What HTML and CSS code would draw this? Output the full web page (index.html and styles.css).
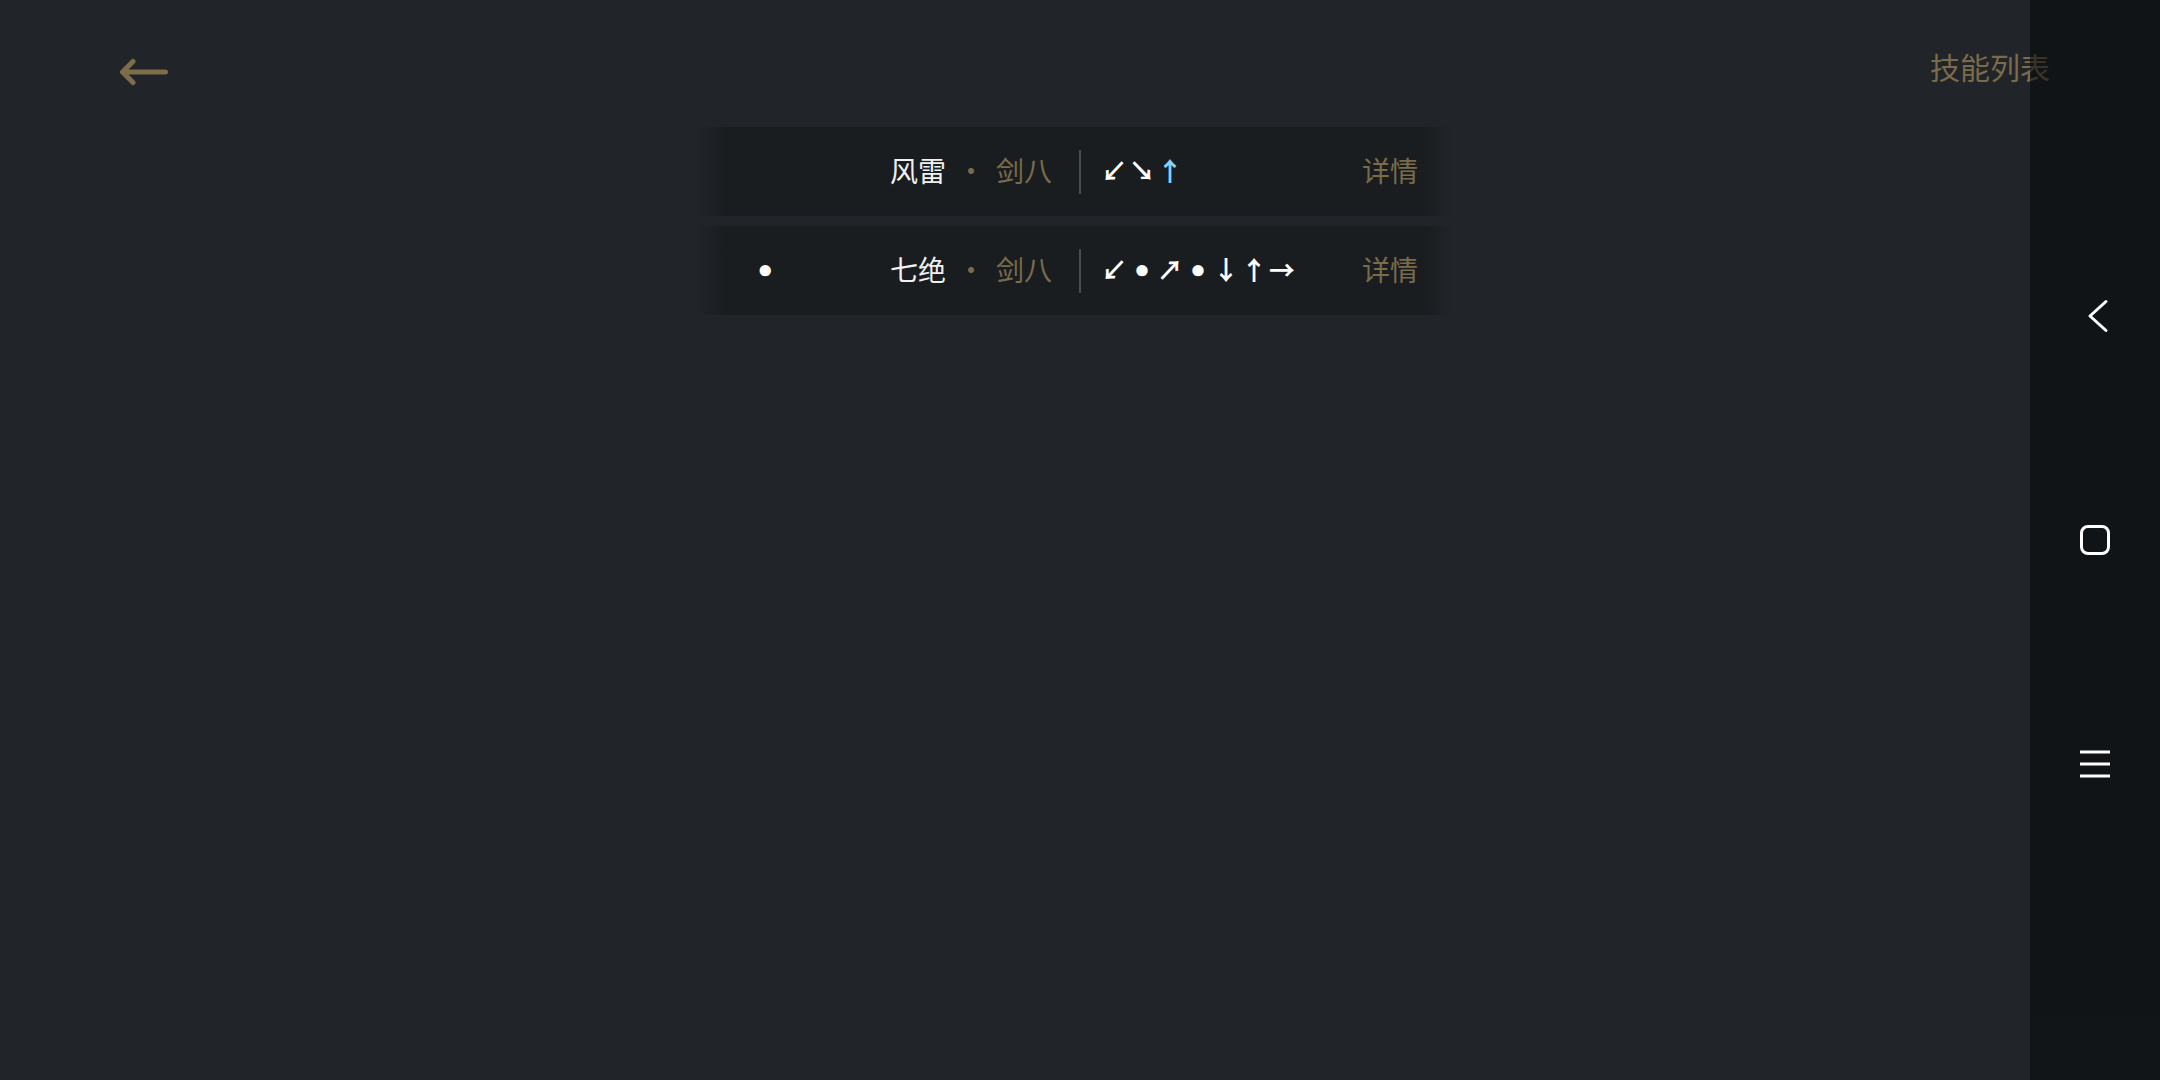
FILE: index.html
```html
<!DOCTYPE html>
<html lang="zh-CN">
<head>
<meta charset="utf-8">
<title>技能列表</title>
<link rel="stylesheet" href="styles.css">
</head>
<body>
<header class="header">
  <div class="back">
    <svg viewBox="0 0 50 28" width="50" height="28"><path d="M46.5 14 H3.5 M14 3.5 L3.5 14 L14 24.5" fill="none" stroke="#7d6d4b" stroke-width="5" stroke-linecap="round" stroke-linejoin="round"/></svg>
  </div>
  <div class="title">技能列表</div>
</header>
<main class="list">
  <div class="card">
    <div class="left">
      <span class="mark"></span>
      <div class="name-group">
        <span class="name">风雷</span><span class="sep">·</span><span class="cls">剑八</span>
      </div>
    </div>
    <div class="divider"></div>
    <div class="arrows"><span>↙</span><span>↘</span><span class="hl">↑</span></div>
    <div class="detail">详情</div>
  </div>
  <div class="card">
    <div class="left">
      <span class="mark">•</span>
      <div class="name-group">
        <span class="name">七绝</span><span class="sep">·</span><span class="cls">剑八</span>
      </div>
    </div>
    <div class="divider"></div>
    <div class="arrows"><span>↙</span><span class="dot">•</span><span>↗</span><span class="dot">•</span><span>↓</span><span>↑</span><span>→</span></div>
    <div class="detail">详情</div>
  </div>
</main>
<nav class="navbar">
  <div class="nav-btn">
    <svg viewBox="0 0 30 36" width="30" height="36"><path d="M26 3.5 L10 18 L26 32.5" fill="none" stroke="#fff" stroke-width="3" stroke-linecap="round" stroke-linejoin="round"/></svg>
  </div>
  <div class="nav-btn">
    <svg viewBox="0 0 34 34" width="34" height="34"><rect x="3.5" y="3.5" width="27" height="27" rx="6.5" fill="none" stroke="#fff" stroke-width="3"/></svg>
  </div>
  <div class="nav-btn">
    <svg viewBox="0 0 34 30" width="34" height="30"><path d="M2 3 H32 M2 15 H32 M2 27 H32" fill="none" stroke="#fff" stroke-width="3"/></svg>
  </div>
</nav>
</body>
</html>
```
FILE: styles.css
```css
html, body {
  margin: 0;
  padding: 0;
}
body {
  background: #212429;
  font-family: "Noto Sans CJK SC", "Noto Sans", sans-serif;
  width: 2160px;
  height: 1080px;
  overflow: hidden;
  position: relative;
}
.header {
  display: flex;
  align-items: center;
  justify-content: space-between;
  height: 40px;
  padding: 48px 110px 0 119px;
}
.back {
  padding-top: 8px;
}
.back svg {
  display: block;
}
.title {
  font-size: 30px;
  line-height: 40px;
  color: #7a6b4b;
  transform: translateY(-2px);
}
.list {
  display: flex;
  flex-direction: column;
  align-items: center;
  gap: 10px;
  margin-top: 39px;
  padding-right: 10px;
}
.card {
  width: 756px;
  height: 89px;
  box-sizing: border-box;
  padding-bottom: 3px;
  display: flex;
  align-items: center;
  background: linear-gradient(90deg, rgba(26, 29, 32, 0) 0, #1a1d20 3.5%, #1a1d20 96.5%, rgba(26, 29, 32, 0) 100%);
}
.left {
  width: 355px;
  box-sizing: border-box;
  padding-left: 58px;
  display: flex;
  align-items: center;
  justify-content: space-between;
}
.mark {
  width: 16px;
  text-align: center;
  font-family: "DejaVu Sans", sans-serif;
  font-weight: bold;
  font-size: 32px;
  line-height: 40px;
  color: #fff;
  transform: translateY(3px);
}
.name-group {
  display: flex;
  align-items: center;
  font-size: 28px;
  line-height: 40px;
}
.name {
  color: #f0f0f0;
  font-weight: 400;
}
.sep {
  width: 50px;
  text-align: center;
  color: #7a6b4b;
}
.cls {
  color: #7a6b4b;
}
.divider {
  width: 2px;
  height: 44px;
  margin-left: 27px;
  margin-top: 3px;
  background: #484c52;
}
.arrows {
  display: flex;
  align-items: center;
  margin-left: 19px;
}
.arrows span {
  width: 28px;
  text-align: center;
  font-family: "Noto Sans CJK SC", sans-serif;
  font-weight: 700;
  font-size: 26px;
  line-height: 40px;
  color: #fff;
}
.arrows .dot {
  font-family: "DejaVu Sans", sans-serif;
  font-size: 32px;
  transform: translateY(3px);
}
.arrows .hl {
  color: #80d4f6;
}
.detail {
  margin-left: auto;
  margin-right: 35px;
  font-size: 28px;
  line-height: 40px;
  color: #7a6b4b;
}
.navbar {
  position: absolute;
  top: 0;
  right: 0;
  width: 130px;
  height: 100%;
  background: rgba(6, 8, 10, 0.55);
  display: flex;
  flex-direction: column;
  align-items: center;
  justify-content: center;
  gap: 164px;
}
.nav-btn {
  width: 60px;
  height: 60px;
  display: flex;
  align-items: center;
  justify-content: center;
}
.nav-btn svg {
  display: block;
}
```
